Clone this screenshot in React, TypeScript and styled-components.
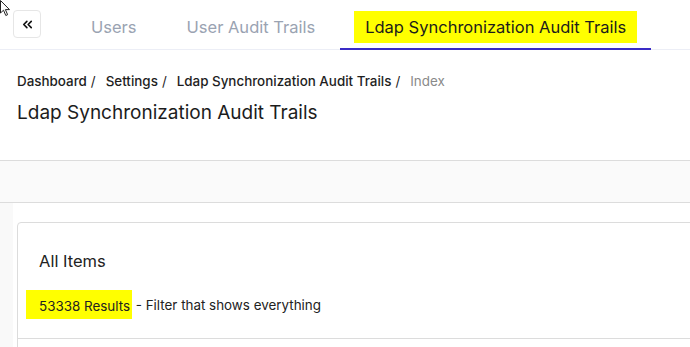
import React from "react";
import styled, { createGlobalStyle } from "styled-components";
import { ChevronsLeft } from "lucide-react";

const GlobalStyle = createGlobalStyle`
  html, body {
    margin: 0;
    padding: 0;
    background: #ffffff;
    overflow: hidden;
  }
  body {
    font-family: Inter, "Noto Sans", "Liberation Sans", sans-serif;
    color: #1f1f1f;
  }
  * { box-sizing: border-box; }
`;

const Page = styled.div`
  position: relative;
  width: 690px;
  min-height: 347px;
  overflow: hidden;
`;

// ---------------- top tab bar ----------------
const TopBar = styled.div`
  display: flex;
  height: 50px;
  border-bottom: 1px solid #eceef6;
`;

const CollapseButton = styled.button`
  align-self: flex-start;
  margin: 10px 25px 0 13px;
  width: 28px;
  height: 28px;
  padding: 0;
  display: flex;
  align-items: center;
  justify-content: center;
  background: #fff;
  border: 1px solid #e6e6e6;
  border-radius: 4px;
  color: #111;
`;

const Tab = styled.div<{ $active?: boolean }>`
  display: flex;
  align-items: center;
  padding: 6px 14px 0;
  height: 50px;
  margin-bottom: -1px;
  border-bottom: 2px solid ${(p) => (p.$active ? "#3a2bc6" : "transparent")};
`;

const TabLabel = styled.span<{ $active?: boolean }>`
  display: flex;
  align-items: center;
  height: 32px;
  padding: 0 11px;
  font-size: 16.5px;
  font-weight: 400;
  color: ${(p) => (p.$active ? "#1c1c1c" : "#9aa3b2")};
  background: ${(p) => (p.$active ? "#ffff00" : "transparent")};
  white-space: nowrap;
`;

// ---------------- page header ----------------
const Header = styled.div`
  padding: 22px 0 0 17px;
  height: 111px;
  border-bottom: 1px solid #dcdcdc;
`;

const Breadcrumb = styled.div`
  display: flex;
  align-items: center;
  height: 18px;
  font-size: 13.4px;
  color: #222;
  white-space: nowrap;
`;

const Crumb = styled.span<{ $current?: boolean }>`
  color: ${(p) => (p.$current ? "#8a8a8a" : "#1e1e1e")};
  font-weight: ${(p) => (p.$current ? 400 : 450)};
`;

const Sep = styled.span`
  padding: 0 10px 0 4px;
`;

const Title = styled.h1`
  margin: 9px 0 0;
  font-size: 19px;
  line-height: 28px;
  font-weight: 400;
  color: #1c1c1c;
  white-space: nowrap;
`;

const Band = styled.div`
  height: 42px;
  background: #fafafa;
  border-bottom: 1px solid #dcdcdc;
`;

// ---------------- content ----------------
const Content = styled.div`
  display: flex;
`;

const SideStrip = styled.div`
  width: 13px;
  background: #f9f9f9;
`;

const Main = styled.div`
  flex: 1;
  padding: 19px 0 0 4px;
  display: flex;
`;

const Card = styled.div`
  flex: 1;
  margin-right: -20px;
  border: 1px solid #dcdcdc;
  border-radius: 4px 0 0 0;
  background: #fff;
  min-height: 140px;
`;

const CardHeader = styled.div`
  padding: 27px 0 19px 21px;
  border-bottom: 1px solid #dcdcdc;
`;

const CardTitle = styled.div`
  font-size: 16.5px;
  line-height: 22px;
  color: #222;
`;

const ResultLine = styled.div`
  margin-top: 18px;
  display: flex;
  align-items: center;
  font-size: 13.4px;
  color: #222;
  white-space: nowrap;
`;

const Highlight = styled.span`
  display: inline-flex;
  align-items: center;
  height: 29px;
  margin-left: -13px;
  padding: 2px 2px 0 13px;
  background: #ffff00;
`;

const Cursor = styled.svg`
  position: absolute;
  left: 0;
  top: 0;
`;

export default function App() {
  const crumbs = ["Dashboard", "Settings", "Ldap Synchronization Audit Trails"];
  const tabs = ["Users", "User Audit Trails", "Ldap Synchronization Audit Trails"];

  return (
    <Page>
      <GlobalStyle />
      <TopBar>
        <CollapseButton>
          <ChevronsLeft size={15} strokeWidth={2.6} />
        </CollapseButton>
        {tabs.map((t, i) => (
          <Tab key={t} $active={i === 2}>
            <TabLabel $active={i === 2}>{t}</TabLabel>
          </Tab>
        ))}
      </TopBar>

      <Header>
        <Breadcrumb>
          {crumbs.map((c) => (
            <React.Fragment key={c}>
              <Crumb>{c}</Crumb>
              <Sep>/</Sep>
            </React.Fragment>
          ))}
          <Crumb $current>Index</Crumb>
        </Breadcrumb>
        <Title>Ldap Synchronization Audit Trails</Title>
      </Header>

      <Band />

      <Content>
        <SideStrip />
        <Main>
          <Card>
            <CardHeader>
              <CardTitle>All Items</CardTitle>
              <ResultLine>
                <Highlight>53338 Results</Highlight>
                &nbsp;- Filter that shows everything
              </ResultLine>
            </CardHeader>
          </Card>
        </Main>
      </Content>

      {/* mouse pointer left in the screenshot */}
      <Cursor width="12" height="17" viewBox="0 0 12 17">
        <path
          d="M0.5 0.5 L0.5 13 L3.5 10.2 L5.8 15.5 L7.6 14.7 L5.4 9.6 L9.5 9.6 Z"
          fill="#fff"
          stroke="#222"
          strokeWidth="1"
          strokeLinejoin="round"
        />
      </Cursor>
    </Page>
  );
}
